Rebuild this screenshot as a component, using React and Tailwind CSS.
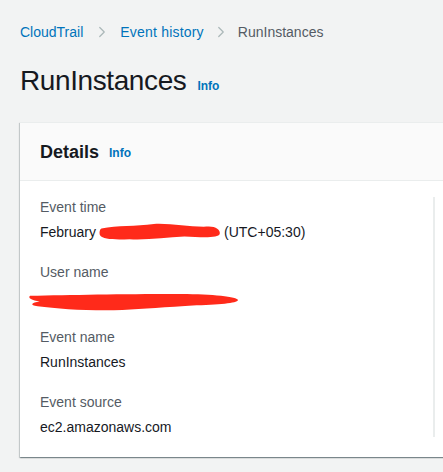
import { ChevronRight } from "lucide-react";

const font = { fontFamily: '"Liberation Sans", Arial, sans-serif' };

function Scribble({ className, d }) {
  return (
    <svg className={className} viewBox="0 0 200 20" preserveAspectRatio="none">
      <path d={d} fill="#ff2a1a" />
    </svg>
  );
}

function Field({ label, children }) {
  return (
    <div className="flex flex-col">
      <div className="text-sm leading-5 text-[#545b64]">{label}</div>
      <div className="mt-[5px] text-sm leading-5 text-[#16191f] min-h-5">{children}</div>
    </div>
  );
}

export default function App() {
  return (
    <div className="min-h-screen bg-[#f2f3f3] overflow-hidden" style={font}>
      <div className="pl-5 pt-[22px]">
        {/* Breadcrumbs */}
        <nav className="flex items-center text-sm leading-5">
          <span className="text-[#0073bb]">CloudTrail</span>
          <ChevronRight className="ml-[10px] mr-[9px] w-[18px] h-[18px] text-[#aab7b8]" strokeWidth={1.6} />
          <span className="text-[#0073bb] tracking-[0.2px]">Event history</span>
          <ChevronRight className="ml-[8px] mr-[8px] w-[18px] h-[18px] text-[#aab7b8]" strokeWidth={1.6} />
          <span className="text-[#545b64]">RunInstances</span>
        </nav>

        {/* Title */}
        <div className="mt-[22px] flex items-baseline gap-[11px]">
          <h1 className="text-[28px] leading-[34px] text-[#16191f] tracking-[-0.4px]">RunInstances</h1>
          <span className="text-xs font-bold text-[#0073bb]">Info</span>
        </div>

        {/* Card */}
        <div className="mt-[24px] w-[460px] bg-white border-t border-[#eaeded] shadow-[0_1px_1px_0_rgba(0,28,36,0.3),1px_1px_1px_0_rgba(0,28,36,0.15),-1px_1px_1px_0_rgba(0,28,36,0.15)]">
          <div className="h-[58px] bg-[#fafafa] border-b border-[#eaeded] flex items-center pl-5 gap-[10px]">
            <span className="text-lg font-bold text-[#16191f] leading-6">Details</span>
            <span className="text-xs font-bold text-[#0073bb] mt-[3px]">Info</span>
          </div>
          <div className="pt-[16px] pb-5">
            <div className="ml-5 w-[395px] border-r-2 border-[#eaeded] flex flex-col gap-5">
              <Field label="Event time">
                <div className="flex items-center">
                  <span>February</span>
                  <Scribble
                    className="w-[122px] h-[18px] mx-[3px]"
                    d="M4 6 C30 2 60 4 90 1 C120 0 150 5 180 4 C192 4 199 8 198 12 C196 17 170 16 140 15 C110 16 80 19 50 18 C25 19 6 18 2 14 C0 11 1 7 4 6 Z"
                  />
                  <span>(UTC+05:30)</span>
                </div>
              </Field>
              <Field label="User name">
                <div className="relative h-5">
                  <Scribble
                    className="absolute -left-[13px] top-[6px] w-[212px] h-[19px]"
                    d="M3 3 C40 2 90 1 140 1 C170 1 195 3 199 7 C200 10 185 12 160 13 C130 15 110 17 90 18 C60 19 30 17 10 14 C2 13 4 10 12 9 C5 8 0 5 3 3 Z"
                  />
                </div>
              </Field>
              <Field label="Event name">RunInstances</Field>
              <Field label="Event source">ec2.amazonaws.com</Field>
            </div>
          </div>
        </div>
      </div>
    </div>
  );
}
